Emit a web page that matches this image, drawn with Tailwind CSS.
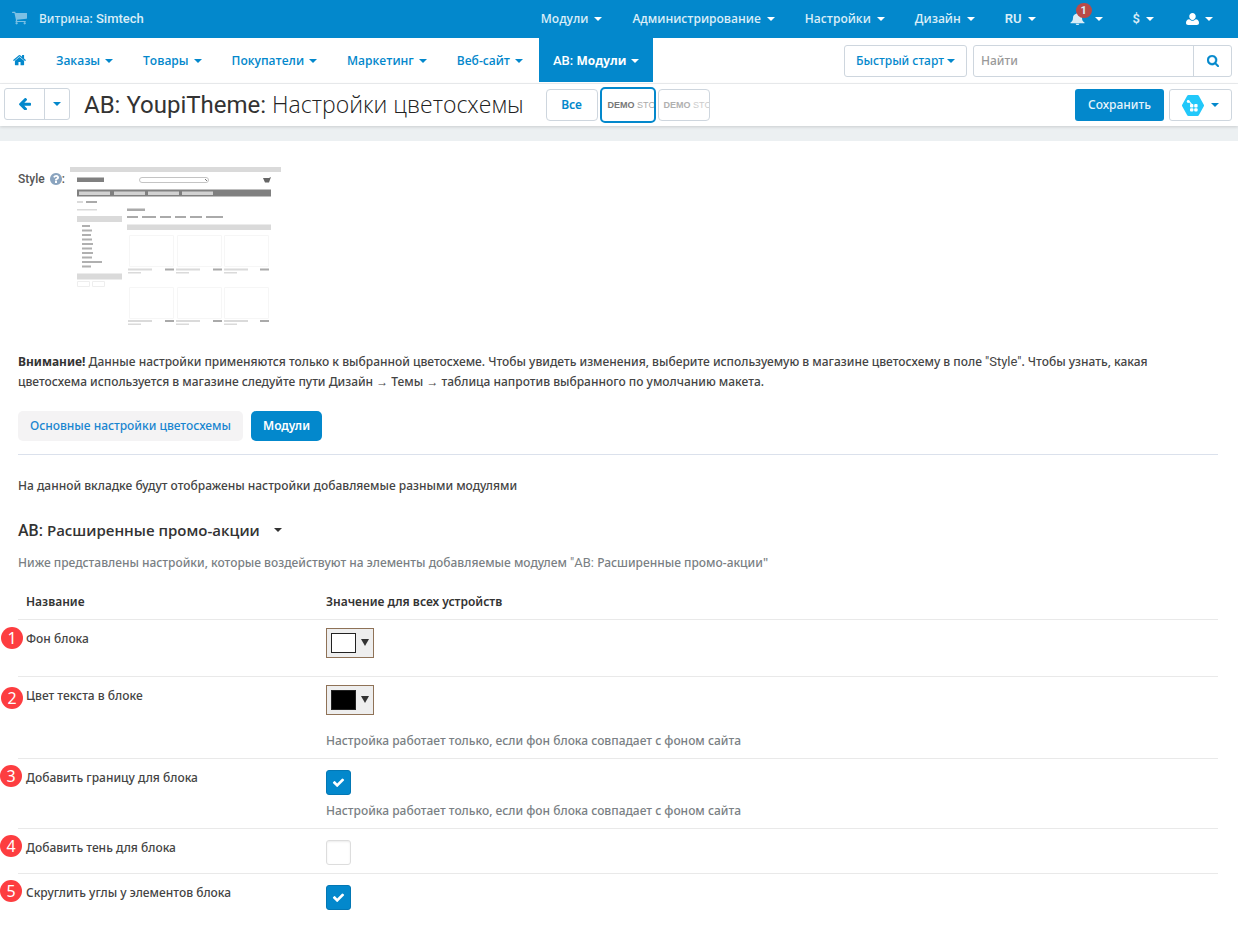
<!DOCTYPE html>
<html lang="ru">
<head>
<meta charset="utf-8">
<meta name="viewport" content="width=device-width, initial-scale=1">
<title>AB: YoupiTheme: Настройки цветосхемы</title>
<script src="https://cdn.jsdelivr.net/npm/@tailwindcss/browser@4"></script>
</head>
<body class="bg-white font-['Noto_Sans',sans-serif] text-[12px] font-medium leading-5 text-[#444]">
<svg class="hidden" aria-hidden="true">
  <symbol id="caret" viewBox="0 0 8 4"><path d="M0 0h8L4 4z" fill="currentColor"/></symbol>
  <symbol id="check" viewBox="0 0 1792 1792"><path fill="currentColor" d="M1671 566q0 40-28 68l-724 724-136 136q-28 28-68 28t-68-28l-136-136-362-362q-28-28-28-68t28-68l136-136q28-28 68-28t68 28l294 295 656-657q28-28 68-28t68 28l136 136q28 28 28 68z"/></symbol>
</svg>

<header>
  <div class="flex h-[38px] items-center justify-between bg-[#0388cc] text-[#d9edf7]">
    <a href="#" class="flex items-center pl-3">
      <svg class="mb-1 size-[15px] text-[#7cc0e4]" viewBox="64 128 1664 1536"><path fill="currentColor" d="M704 1536q0 52-38 90t-90 38-90-38-38-90 38-90 90-38 90 38 38 90zm896 0q0 52-38 90t-90 38-90-38-38-90 38-90 90-38 90 38 38 90zm128-1088v512q0 24-16.5 42.5t-40.5 21.5l-1044 122q13 60 13 70 0 16-24 64h920q26 0 45 19t19 45-19 45-45 19h-1024q-26 0-45-19t-19-45q0-11 8-31.5t16-36 21.5-40 15.5-29.5l-177-823h-204q-26 0-45-19t-19-45 19-45 45-19h256q16 0 28.5 6.5t19.5 15.5 13 24.5 8 26 5.5 29.5 4.5 26h1201q26 0 45 19t19 45z"/></svg>
      <span class="ml-3 font-medium">Витрина: <span class="font-[Roboto] text-[13px] font-medium leading-none">Simtech</span></span>
    </a>
    <nav class="flex items-center gap-[30px] pr-[25px] font-['Open_Sans',sans-serif] font-semibold">
      <a href="#" class="flex items-center gap-[6px]">Модули <svg class="h-1 w-2 text-white"><use href="#caret"/></svg></a>
      <a href="#" class="flex items-center gap-[6px]">Администрирование <svg class="h-1 w-2 text-white"><use href="#caret"/></svg></a>
      <a href="#" class="flex items-center gap-[6px]">Настройки <svg class="h-1 w-2 text-white"><use href="#caret"/></svg></a>
      <a href="#" class="flex items-center gap-[6px]">Дизайн <svg class="h-1 w-2 text-white"><use href="#caret"/></svg></a>
      <a href="#" class="flex items-center gap-[6px] font-[Roboto] text-[13px]">RU <svg class="h-1 w-2 text-white"><use href="#caret"/></svg></a>
      <a href="#" class="relative ml-1 flex items-center gap-[10px]" aria-label="Уведомления">
        <svg class="h-3 w-[15px]" viewBox="0 0 15 14" preserveAspectRatio="none"><path fill="currentColor" d="M7.500 0c.7 0 1 .5 1 1 2.300.5 3.500 2.300 3.500 4.500 0 3 .9 4.300 2.500 5.500v1h-14v-1C2 9.800 3 8.500 3 5.500 3 3.300 4.200 1.500 6.500 1c0-.5.300-1 1-1zM5.700 12.500h3.600c0 .9-.8 1.500-1.800 1.500s-1.800-.6-1.800-1.500z"/></svg>
        <span class="absolute -top-[10px] left-[6px] flex h-[15px] w-4 items-center justify-center rounded-full bg-[#b94a48] font-[Roboto] text-[11px] font-bold leading-none">1</span>
        <svg class="h-1 w-2 text-white"><use href="#caret"/></svg>
      </a>
      <a href="#" class="flex items-center gap-[6px] font-[Roboto] text-[13px]">$ <svg class="h-1 w-2 text-white"><use href="#caret"/></svg></a>
      <a href="#" class="ml-[2px] flex items-center gap-[6px]" aria-label="Профиль">
        <svg class="h-3 w-[13px] text-white" viewBox="0 0 12 12" preserveAspectRatio="none"><path fill="currentColor" d="M6 0c1.700 0 3 1.300 3 3.300S7.700 7 6 7 3 5.300 3 3.300 4.300 0 6 0zM3 6.300C3.800 7.200 4.800 7.800 6 7.800s2.200-.6 3-1.500c2 .2 3 1.600 3 3.700 0 1.300-.8 2-2 2H2c-1.200 0-2-.7-2-2 0-2.100 1-3.500 3-3.700z"/></svg>
        <svg class="h-1 w-2 text-white"><use href="#caret"/></svg>
      </a>
    </nav>
  </div>

  <div class="flex h-[46px] items-start justify-between border-b border-[#eceef0] pr-[6px]">
    <nav class="flex h-11 items-center pl-[13px] font-['Open_Sans',sans-serif] font-semibold text-[#0388cc]">
      <a href="#" aria-label="Главная"><svg class="h-3 w-[13px]" viewBox="80 240 1632 1296"><path fill="currentColor" d="M1472 992v480q0 26-19 45t-45 19h-384v-384h-256v384h-384q-26 0-45-19t-19-45v-480q0-1 .5-3t.5-3l575-474 575 474q1 2 1 6zm223-69l-62 74q-8 9-21 11h-3q-13 0-21-7l-692-577-692 577q-12 8-24 7-13-2-21-11l-62-74q-8-10-7-23.500t11-21.500l719-599q32-26 76-26t76 26l244 204v-195q0-14 9-23t23-9h192q14 0 23 9t9 23v408l219 182q10 8 11 21.500t-7 23.500z"/></svg></a>
      <div class="ml-[30px] flex items-center gap-[30px] pt-px">
        <a href="#" class="flex items-center gap-[5px]">Заказы <svg class="h-1 w-2"><use href="#caret"/></svg></a>
        <a href="#" class="flex items-center gap-[5px]">Товары <svg class="h-1 w-2"><use href="#caret"/></svg></a>
        <a href="#" class="flex items-center gap-[5px]">Покупатели <svg class="h-1 w-2"><use href="#caret"/></svg></a>
        <a href="#" class="flex items-center gap-[5px]">Маркетинг <svg class="h-1 w-2"><use href="#caret"/></svg></a>
        <a href="#" class="flex items-center gap-[5px]">Веб-сайт <svg class="h-1 w-2"><use href="#caret"/></svg></a>
      </div>
      <a href="#" class="ml-4 flex h-11 items-center gap-[5px] bg-[#0388cc] px-[14px] pt-px font-bold text-white"><span><span class="font-[Roboto] text-[13px] font-medium leading-none">AB: </span>Модули</span> <svg class="h-1 w-2"><use href="#caret"/></svg></a>
    </nav>
    <div class="flex gap-[6px] pt-[7px]">
      <button type="button" class="flex h-8 w-[123px] items-center justify-center gap-[3px] rounded-[3px] border border-[#ced6de] text-[#0388cc]">Быстрый старт <svg class="h-1 w-2"><use href="#caret"/></svg></button>
      <form class="flex h-8 rounded-[3px] border border-[#ced6de]">
        <input type="text" aria-label="Найти" placeholder="Найти" class="w-[219px] px-[7px] outline-none placeholder:text-[#999]">
        <button type="button" aria-label="Поиск" class="flex w-[38px] items-center justify-center border-l border-[#ced6de] text-[#0388cc]"><svg class="size-3" viewBox="64 128 1664 1664"><path fill="currentColor" stroke="currentColor" stroke-width="50" d="M1216 832q0-185-131.500-316.500t-316.500-131.500-316.500 131.500-131.500 316.500 131.500 316.500 316.500 131.500 316.500-131.500 131.500-316.500zm512 832q0 52-38 90t-90 38q-54 0-90-38l-343-342q-179 124-399 124-143 0-273.500-55.500t-225-150-150-225-55.500-273.500 55.500-273.500 150-225 225-150 273.500-55.500 273.500 55.500 225 150 150 225 55.500 273.500q0 220-124 399l343 343q37 37 37 90z"/></svg></button>
      </form>
    </div>
  </div>

  <div class="relative flex h-[42px] items-center justify-between bg-white pl-1 pr-[6px] shadow-[0_1px_3px_rgba(0,0,0,0.15)]">
    <div class="flex items-center">
      <div class="mb-[2px] flex h-8 rounded-[3px] border border-[#ced6de] text-[#0388cc]">
        <button type="button" aria-label="Назад" class="flex w-[39px] items-center justify-center"><svg class="h-3 w-[13px]" viewBox="60 190 1604 1466"><path fill="currentColor" d="M1664 896v128q0 53-32.500 90.500t-84.500 37.500h-704l293 294q38 36 38 90t-38 90l-75 76q-37 37-90 37-52 0-91-37l-651-652q-37-37-37-90 0-52 37-91l651-650q38-38 91-38 52 0 90 38l75 74q38 38 38 91t-38 91l-293 293h704q52 0 84.500 37.500t32.500 90.500z"/></svg></button>
        <button type="button" aria-label="Ещё" class="flex w-[25px] items-center justify-center border-l border-[#ced6de]"><svg class="h-1 w-2"><use href="#caret"/></svg></button>
      </div>
      <h1 class="mb-[2px] ml-[14px] whitespace-nowrap font-['Open_Sans',sans-serif] text-[23px] font-light leading-10 text-[#222]"><span class="font-[Roboto] text-[24px] font-normal leading-none text-[#333]">AB: YoupiTheme: </span>Настройки цветосхемы</h1>
      <div class="ml-[22px] flex items-center gap-[2px]">
        <button type="button" class="h-8 w-[52px] rounded-[4px] border border-[#ced6de] font-semibold text-[#0388cc]">Все</button>
        <button type="button" class="h-9 w-14 overflow-hidden whitespace-nowrap rounded-[5px] border-2 border-[#0388cc] pl-[6px] text-left font-['Liberation_Sans'] text-[9px] font-normal text-[#aaa]"><b class="text-[#777]">DEMO</b> STO</button>
        <button type="button" class="h-8 w-[52px] overflow-hidden whitespace-nowrap rounded-[4px] border border-[#ced6de] pl-[5px] text-left font-['Liberation_Sans'] text-[9px] font-normal text-[#ccc]"><b class="text-[#b0b0b0]">DEMO</b> STO</button>
      </div>
    </div>
    <div class="flex gap-[5px]">
      <button type="button" class="h-8 w-[89px] rounded-[3px] bg-[#0388cc] text-[#e6f4fb]">Сохранить</button>
      <button type="button" aria-label="Модуль" class="flex h-8 w-[63px] items-center justify-center gap-[7px] rounded-[3px] border border-[#ced6de] text-[#0388cc]">
        <svg class="h-[21px] w-[22px]" viewBox="0 0 22 21"><path fill="#22c8fa" stroke="#22c8fa" stroke-width="3" stroke-linejoin="round" d="M6.500 1.500h9l5 9-5 9h-9l-5-9z"/><g fill="#fff"><circle cx="6.200" cy="6.500" r="1.400"/><path d="M6 6l1-.6 3 3.600-1 .6z"/><rect x="8" y="9" width="3.400" height="3.400" rx="1"/><rect x="12.200" y="9" width="3.400" height="3.400" rx="1"/><rect x="8" y="13.200" width="3.400" height="3.400" rx="1"/><rect x="12.200" y="13.200" width="3.400" height="3.400" rx="1"/></g></svg>
        <svg class="h-1 w-2"><use href="#caret"/></svg>
      </button>
    </div>
  </div>
  <div class="h-[15px] bg-[#ecf0f2]"></div>
</header>

<main class="pb-4 pl-[18px] pr-5">
  <section class="flex pt-[26px]">
    <p class="flex h-[23px] w-[52px] items-center gap-[5px] whitespace-nowrap font-[Roboto] text-[12px] text-[#555]">Style <span class="flex items-center"><svg class="size-3 text-[#8aa4bf]" viewBox="128 128 1536 1536"><path fill="currentColor" d="M1024 1376v-192q0-14-9-23t-23-9h-192q-14 0-23 9t-9 23v192q0 14 9 23t23 9h192q14 0 23-9t9-23zm256-672q0-88-55.500-163t-138.500-116-170-41q-243 0-371 213-15 24 8 42l132 100q7 6 19 6 16 0 25-12 53-68 86-92 34-24 86-24 48 0 85.500 26t37.500 59q0 38-20 61t-68 45q-63 28-115.500 86.500t-52.500 125.500v36q0 14 9 23t23 9h192q14 0 23-9t9-23q0-19 21.500-49.500t54.500-49.500q32-18 49-28.500t46-35 44.500-48 28-60.500 12.500-81zm384 192q0 209-103 385.500t-279.500 279.500-385.500 103-385.500-103-279.500-279.500-103-385.500 103-385.500 279.500-279.500 385.500-103 385.500 103 279.500 279.500 103 385.500z"/></svg>:</span></p>
    <svg class="h-40 w-[211px]" viewBox="0 0 211 160" role="img" aria-label="Макет витрины">
      <g fill="#dadada">
        <path d="M0 0h211v5H0zM7 49h45v6H7zM7 106.500h45v6H7zM57 57.500h144v5.500H57z"/>
        <path d="M7 34h6v2H7zM7 42h20v1.500H7zM58 101.500h24v2H58zM58 105h13v1.500H58zM106 101.500h24v2h-24zM106 105h13v1.500h-13zM154 101.500h24v2h-24zM154 105h13v1.500h-13zM58 153h24v2H58zM58 156.500h13v1.500H58zM106 153h24v2h-24zM106 156.500h13v1.500h-13zM154 153h24v2h-24zM154 156.500h13v1.500h-13z"/>
      </g>
      <path fill="#808080" d="M7 22.500h194v7H7zM7 10.500h27v4.500H7z"/>
      <path fill="#d2d2d2" d="M9 24.500h31v3.500H9zM44 24.500h31v3.500H44zM78 24.500h31v3.500H78zM112 24.500h31v3.500h-31z"/>
      <path fill="#aaa" d="M16 34h11v2H16zM57 41.500h18v2.500H57zM57 49h11v2H57zM72 49h14v2H72zM90 49h11v2H90zM105 49h11v2h-11zM120 49h12v2h-12zM136 49h17v2h-17zM95 101.500h9v2h-9zM143 101.500h9v2h-9zM190 101.500h9v2h-9zM95 153h9v2h-9zM143 153h9v2h-9zM190 153h9v2h-9z"/>
      <path fill="#b0b0b0" d="M12 58h8v2h-8zM12 62.500h10v2H12zM12 67h9v2h-9zM12 71.500h10v2H12zM12 76h11v2H12zM12 80.500h10v2H12zM12 85h11v2H12zM12 89.500h10v2H12zM12 94h20v2H12zM12 98.500h9v2h-9z"/>
      <g fill="none" stroke="#f6f6f6"><path d="M59.500 68.500h44v31h-44zM107.500 68.500h44v31h-44zM154.500 68.500h44v31h-44zM59.500 120.500h44v31h-44zM107.500 120.500h44v31h-44zM154.500 120.500h44v31h-44z"/><path stroke="#eee" d="M7.500 114.500h12v5h-12zM22.500 114.500h12v5h-12z"/></g>
      <rect x="69.500" y="10.500" width="69" height="5" rx="2.500" fill="#fff" stroke="#c4c4c4"/>
      <path d="M135 12l2 2" stroke="#777"/>
      <path fill="#666" d="M193 11h6l2-1-2 5.500h-4z"/>
    </svg>
  </section>

  <p class="mt-[25px] pr-8"><b class="text-[#333]">Внимание!</b> Данные настройки применяются только к выбранной цветосхеме. Чтобы увидеть изменения, выберите используемую в магазине цветосхему в поле <span class="font-[Roboto] text-[13px] font-normal leading-none">"Style"</span>. Чтобы узнать, какая цветосхема используется в магазине следуйте пути Дизайн → Темы → таблица напротив выбранного по умолчанию макета.</p>

  <div class="mt-[19px] flex gap-2 border-b border-[#dbe1ec] pb-[13px]">
    <button type="button" class="h-[30px] rounded-[5px] bg-[#f4f3f4] px-3 text-[#1a86d0]">Основные настройки цветосхемы</button>
    <button type="button" class="h-[30px] rounded-[5px] bg-[#0388cc] px-3 font-semibold text-white">Модули</button>
  </div>

  <p class="mt-[21px]">На данной вкладке будут отображены настройки добавляемые разными модулями</p>

  <h2 class="mt-6 flex items-center gap-[14px] font-['Open_Sans',sans-serif] text-[15px] font-semibold text-[#333]"><span><span class="font-[Roboto] text-[16px] font-medium leading-none">AB: </span>Расширенные промо-акции</span> <svg class="h-1 w-2"><use href="#caret"/></svg></h2>
  <p class="mt-[13px] text-[#7a7f84]">Ниже представлены настройки, которые воздействуют на элементы добавляемые модулем <span class="font-[Roboto] text-[13px] font-normal leading-none">"AB: </span>Расширенные промо-акции"</p>

  <table class="mt-[10px] w-full table-fixed border-collapse">
    <thead>
      <tr class="h-9 border-b border-[#e9e9e9] text-left text-[#333]">
        <th class="w-1/4 px-2 pt-[2px] font-semibold">Название</th>
        <th class="px-2 pt-[2px] font-semibold">Значение для всех устройств</th>
      </tr>
    </thead>
    <tbody class="align-top">
      <tr class="h-[57px] border-b border-[#e9e9e9]">
        <td class="relative px-2 pt-[9px]"><span class="absolute -left-[17px] top-[7px] flex size-[22px] items-center justify-center rounded-full bg-[#fd3d40] text-[16px] font-normal text-white">1</span>Фон блока</td>
        <td class="p-2"><button type="button" aria-label="Фон блока" class="flex h-[30px] w-12 items-center gap-[5px] border border-[#8f7257] bg-[#eee] pl-1"><span class="h-5 w-[25px] border border-[#222] bg-white"></span><svg class="h-[7px] w-2" viewBox="0 0 8 7"><path d="M0 0h8L4 7z" fill="#333"/></svg></button></td>
      </tr>
      <tr class="h-[82px] border-b border-[#e9e9e9]">
        <td class="relative px-2 pt-[9px]"><span class="absolute -left-[17px] top-[10px] flex size-[22px] items-center justify-center rounded-full bg-[#fd3d40] text-[16px] font-normal text-white">2</span>Цвет текста в блоке</td>
        <td class="px-2 pt-2"><button type="button" aria-label="Цвет текста в блоке" class="flex h-[30px] w-12 items-center gap-[5px] border border-[#8f7257] bg-[#eee] pl-1"><span class="h-5 w-[25px] border border-[#222] bg-black"></span><svg class="h-[7px] w-2" viewBox="0 0 8 7"><path d="M0 0h8L4 7z" fill="#333"/></svg></button>
          <p class="mt-4 text-[#7a7f84]">Настройка работает только, если фон блока совпадает с фоном сайта</p></td>
      </tr>
      <tr class="h-[70px] border-b border-[#e9e9e9]">
        <td class="relative px-2 pt-[9px]"><span class="absolute -left-[18px] top-[6px] flex size-[22px] items-center justify-center rounded-full bg-[#fd3d40] text-[16px] font-normal text-white">3</span><label for="border-on">Добавить границу для блока</label></td>
        <td class="px-2 pt-[11px]"><span class="relative block size-[25px]"><input id="border-on" type="checkbox" checked class="peer block size-[25px] appearance-none rounded-[3px] border border-[#ddd] checked:border-[#0377b4] checked:bg-[#0388cc]"><svg class="pointer-events-none absolute left-[6px] top-[6px] hidden size-[13px] text-white peer-checked:block"><use href="#check"/></svg></span>
          <p class="mt-[6px] text-[#7a7f84]">Настройка работает только, если фон блока совпадает с фоном сайта</p></td>
      </tr>
      <tr class="h-[45px] border-b border-[#e9e9e9]">
        <td class="relative px-2 pt-[9px]"><span class="absolute -left-[18px] top-[6px] flex size-[22px] items-center justify-center rounded-full bg-[#fd3d40] text-[16px] font-normal text-white">4</span><label for="shadow-on">Добавить тень для блока</label></td>
        <td class="px-2 pt-[11px]"><span class="relative block size-[25px]"><input id="shadow-on" type="checkbox" class="peer block size-[25px] appearance-none rounded-[3px] border border-[#ddd] shadow-[inset_0_1px_2px_rgba(0,0,0,0.08)] checked:border-[#0377b4] checked:bg-[#0388cc]"><svg class="pointer-events-none absolute left-[6px] top-[6px] hidden size-[13px] text-white peer-checked:block"><use href="#check"/></svg></span></td>
      </tr>
      <tr class="h-[45px]">
        <td class="relative px-2 pt-[9px]"><span class="absolute -left-[18px] top-[6px] flex size-[22px] items-center justify-center rounded-full bg-[#fd3d40] text-[16px] font-normal text-white">5</span><label for="round-on">Скруглить углы у элементов блока</label></td>
        <td class="px-2 pt-[11px]"><span class="relative block size-[25px]"><input id="round-on" type="checkbox" checked class="peer block size-[25px] appearance-none rounded-[3px] border border-[#ddd] checked:border-[#0377b4] checked:bg-[#0388cc]"><svg class="pointer-events-none absolute left-[6px] top-[6px] hidden size-[13px] text-white peer-checked:block"><use href="#check"/></svg></span></td>
      </tr>
    </tbody>
  </table>
</main>
</body>
</html>
